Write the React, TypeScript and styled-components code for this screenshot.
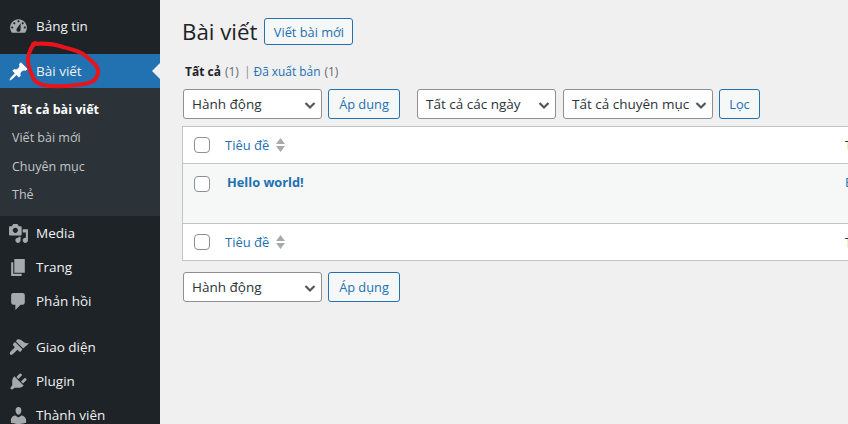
import React from 'react';
import styled, { createGlobalStyle } from 'styled-components';

const GlobalStyle = createGlobalStyle`
  html, body {
    margin: 0;
    padding: 0;
    background: #f0f0f1;
    overflow: hidden;
  }
  * {
    box-sizing: border-box;
  }
`;

const Page = styled.div`
  position: relative;
  width: 848px;
  height: 424px;
  display: flex;
  overflow: hidden;
  font-family: 'Open Sans', 'Liberation Sans', sans-serif;
  font-size: 13px;
  color: #3c434a;
`;

const Sidebar = styled.nav`
  width: 160px;
  flex-shrink: 0;
  background: #1d2327;
  padding-top: 9px;
`;

const MenuItem = styled.div<{ $active?: boolean; $gapTop?: number }>`
  position: relative;
  height: 34px;
  margin-top: ${(p) => p.$gapTop ?? 0}px;
  display: flex;
  align-items: center;
  padding-left: 8px;
  gap: 7px;
  font-size: 13.5px;
  color: #f0f0f1;
  background: ${(p) => (p.$active ? '#2271b1' : 'transparent')};
  svg {
    width: 21px;
    height: 21px;
    fill: ${(p) => (p.$active ? '#fff' : '#a7aaad')};
    flex-shrink: 0;
  }
`;

const ActiveArrow = styled.span`
  position: absolute;
  right: 0;
  top: 9px;
  border: 8px solid transparent;
  border-right-color: #f0f0f1;
  border-left-width: 0;
`;

const SubMenu = styled.div`
  height: 128px;
  background: #2c3338;
  padding: 7px 0 0 12px;
`;

const SubItem = styled.div<{ $current?: boolean }>`
  height: 28.5px;
  display: flex;
  align-items: center;
  font-size: 12.5px;
  color: ${(p) => (p.$current ? '#fff' : '#c3c4c7')};
  font-weight: ${(p) => (p.$current ? 700 : 400)};
`;

const Main = styled.main`
  flex: 1;
  min-width: 0;
  padding: 18px 0 0 22px;
`;

const TitleRow = styled.div`
  display: flex;
  align-items: center;
  gap: 7px;
  height: 27px;
`;

const Title = styled.h1`
  margin: 0;
  font-size: 22.3px;
  line-height: 27px;
  font-weight: 400;
  color: #1d2327;
`;

const Button = styled.div<{ $width: number; $height?: number }>`
  width: ${(p) => p.$width}px;
  height: ${(p) => p.$height ?? 30}px;
  flex-shrink: 0;
  display: flex;
  align-items: center;
  justify-content: center;
  border: 1px solid #2271b1;
  border-radius: 3px;
  background: #f6f7f7;
  color: #2271b1;
  font-size: 12.8px;
`;

const Tabs = styled.div`
  display: flex;
  align-items: center;
  height: 18px;
  margin-top: 17px;
  padding-left: 3px;
  font-size: 12px;
  color: #646970;
`;

const TabCurrent = styled.span`
  color: #1d2327;
  font-weight: 700;
`;

const TabLink = styled.span`
  color: #2271b1;
  font-size: 11.9px;
`;

const TabCount = styled.span`
  margin-left: 4px;
`;

const TabSep = styled.span`
  margin: 0 3px 0 5px;
  color: #8c8f94;
`;

const Toolbar = styled.div<{ $top: number }>`
  display: flex;
  align-items: center;
  margin-top: ${(p) => p.$top}px;
  padding-left: 1px;
`;

const Select = styled.div<{ $width: number; $before?: number; $after?: number }>`
  position: relative;
  width: ${(p) => p.$width}px;
  height: 30px;
  flex-shrink: 0;
  margin-left: ${(p) => p.$before ?? 0}px;
  margin-right: ${(p) => p.$after ?? 6}px;
  display: flex;
  align-items: center;
  padding-left: 8px;
  background: #fff;
  border: 1px solid #8c8f94;
  border-radius: 3px;
  font-size: 13.5px;
  color: #2c3338;
  white-space: nowrap;
  svg {
    position: absolute;
    right: 5px;
    top: 9px;
    width: 12px;
    height: 12px;
    fill: none;
    stroke: #50575e;
    stroke-width: 2.2;
  }
`;

const Table = styled.div`
  width: 700px;
  margin-top: 7px;
  background: #fff;
  border: 1px solid #c3c4c7;
  border-right: 0;
`;

const Row = styled.div<{ $height: number; $alt?: boolean; $divider?: boolean; $alignTop?: boolean }>`
  height: ${(p) => p.$height}px;
  display: flex;
  align-items: ${(p) => (p.$alignTop ? 'flex-start' : 'center')};
  padding: ${(p) => (p.$alignTop ? '12px' : '0')} 0 0 11px;
  background: ${(p) => (p.$alt ? '#f6f7f7' : '#fff')};
  border-top: ${(p) => (p.$divider ? '1px solid #c3c4c7' : '0')};
`;

const Checkbox = styled.span`
  width: 16px;
  height: 16px;
  flex-shrink: 0;
  background: #fff;
  border: 1px solid #8c8f94;
  border-radius: 4px;
`;

const TitleCell = styled.div`
  width: 635px;
  flex-shrink: 0;
  display: flex;
  align-items: center;
`;

const ColumnTitle = styled.span`
  margin-left: 15px;
  font-size: 13px;
  color: #2271b1;
`;

const SortIcon = styled.svg`
  width: 9px;
  height: 14px;
  margin-left: 7px;
  fill: #a7aaad;
`;

const PostTitle = styled.span`
  margin-left: 17px;
  margin-top: -3px;
  font-size: 12.8px;
  font-weight: 700;
  color: #2271b1;
`;

const AuthorCell = styled.span<{ $color: string; $up?: number }>`
  white-space: nowrap;
  margin-top: ${(p) => -(p.$up ?? 0)}px;
  font-size: 13px;
  color: ${(p) => p.$color};
`;

const Scribble = styled.svg`
  position: absolute;
  left: 24px;
  top: 36px;
  width: 84px;
  height: 56px;
  fill: none;
  stroke: #e8141c;
  stroke-width: 4;
  stroke-linecap: round;
  stroke-linejoin: round;
`;

const icons: Record<string, string> = {
  dashboard:
    'M3.76 16h12.48c1.1-1.37 1.76-3.11 1.76-5 0-4.42-3.58-8-8-8s-8 3.58-8 8c0 1.89.66 3.63 1.76 5zM10 4c.55 0 1 .45 1 1s-.45 1-1 1-1-.45-1-1 .45-1 1-1zM6 6c.55 0 1 .45 1 1s-.45 1-1 1-1-.45-1-1 .45-1 1-1zm8 0c.55 0 1 .45 1 1s-.45 1-1 1-1-.45-1-1 .45-1 1-1zm-5.37 5.55L12 7v6c0 1.1-.9 2-2 2s-2-.9-2-2c0-.57.24-1.08.63-1.45zM4 10c.55 0 1 .45 1 1s-.45 1-1 1-1-.45-1-1 .45-1 1-1zm12 0c.55 0 1 .45 1 1s-.45 1-1 1-1-.45-1-1 .45-1 1-1z',
  post: 'M10.44 3.02l1.82-1.82 6.36 6.35-1.83 1.82c-1.05-.68-2.48-.57-3.41.36l-.75.75c-.92.93-1.04 2.35-.35 3.41l-1.83 1.82-2.41-2.41-2.8 2.79c-.42.42-3.38 2.71-3.8 2.29s1.86-3.39 2.28-3.81l2.79-2.79L4.1 9.36l1.83-1.82c1.05.69 2.48.57 3.4-.36l.75-.75c.93-.92 1.05-2.35.36-3.41z',
  media:
    'M13 11V4c0-.55-.45-1-1-1h-1.67L9 1H5L3.67 3H2c-.55 0-1 .45-1 1v7c0 .55.45 1 1 1h10c.55 0 1-.45 1-1zM7 4.5c1.38 0 2.5 1.12 2.5 2.5S8.38 9.5 7 9.5 4.5 8.38 4.5 7 5.62 4.5 7 4.5zM14 6h5v10.5c0 1.38-1.12 2.5-2.5 2.5S14 17.88 14 16.5s1.12-2.5 2.5-2.5c.17 0 .34.02.5.05V9h-3V6zm-4 8.05V13h2v3.5c0 1.38-1.12 2.5-2.5 2.5S7 17.88 7 16.5 8.12 14 9.5 14c.17 0 .34.02.5.05z',
  page: 'M6 15V2h10v13H6zm-1 1h8v2H3V5h2v11z',
  comments: 'M5 2h9c1.1 0 2 .9 2 2v7c0 1.1-.9 2-2 2h-2l-5 5v-5H5c-1.1 0-2-.9-2-2V4c0-1.1.9-2 2-2z',
  appearance:
    'M14.48 11.06L7.41 3.99l1.5-1.5c.5-.56 2.3-.47 3.51.32 1.21.8 1.43 1.28 2.91 2.1 1.18.64 2.45 1.26 4.45.85-1 1.8-3.2 3.4-5.3 5.3zm-.71.71L6.7 4.7 4.93 6.47c-.39.39-.39 1.02 0 1.41l1.06 1.06c.39.39.39 1.03 0 1.42l-3.5 3.5c-.8.8-1 2.1-.4 2.8s1.9.4 2.7-.4l3.5-3.5c.39-.39 1.03-.39 1.42 0l1.06 1.06c.39.39 1.02.39 1.41 0z',
  plugin:
    'M13.11 4.36L9.87 7.6 8 5.73l3.24-3.24c.35-.34 1.05-.2 1.56.32.52.51.66 1.21.31 1.55zm-8 1.77l.91-1.12 9.01 9.01-1.19.84c-.71.71-2.63 1.16-3.82 1.16H6.14L4.9 17.26c-.59.59-1.54.59-2.12 0-.59-.58-.59-1.53 0-2.12l1.24-1.24v-3.88c0-1.13.4-3.19 1.09-3.89zm7.26 3.97l3.24-3.24c.34-.35 1.04-.21 1.55.31.52.51.66 1.21.31 1.55l-3.24 3.25z',
  users:
    'M10 9.25c-2.27 0-2.73-3.44-2.73-3.44C7 4.02 7.82 2 9.97 2c2.16 0 2.98 2.02 2.71 3.81 0 0-.41 3.44-2.68 3.44zm0 2.57L12.72 10c2.39 0 4.52 2.33 4.52 4.53v2.49s-3.65 1.13-7.24 1.13c-3.65 0-7.24-1.13-7.24-1.13v-2.49c0-2.25 1.94-4.48 4.15-4.48z',
};

function MenuIcon({ name }: { name: string }) {
  return (
    <svg viewBox="0 0 20 20">
      <path d={icons[name]} />
    </svg>
  );
}

function Chevron() {
  return (
    <svg viewBox="0 0 12 12">
      <path d="M1.5 4l4.5 4.5L10.5 4" />
    </svg>
  );
}

function HeaderCells() {
  return (
    <>
      <Checkbox />
      <TitleCell>
        <ColumnTitle>Tiêu đề</ColumnTitle>
        <SortIcon viewBox="0 0 9 14">
          <path d="M4.5 0L9 6H0zM0 8h9l-4.5 6z" />
        </SortIcon>
      </TitleCell>
      <AuthorCell $color="#2c3338">Tác giả</AuthorCell>
    </>
  );
}

function App() {
  return (
    <Page>
      <GlobalStyle />
      <Sidebar>
        <MenuItem>
          <MenuIcon name="dashboard" />
          Bảng tin
        </MenuItem>
        <MenuItem $active $gapTop={11}>
          <MenuIcon name="post" />
          Bài viết
          <ActiveArrow />
        </MenuItem>
        <SubMenu>
          <SubItem $current>Tất cả bài viết</SubItem>
          <SubItem>Viết bài mới</SubItem>
          <SubItem>Chuyên mục</SubItem>
          <SubItem>Thẻ</SubItem>
        </SubMenu>
        <MenuItem>
          <MenuIcon name="media" />
          Media
        </MenuItem>
        <MenuItem>
          <MenuIcon name="page" />
          Trang
        </MenuItem>
        <MenuItem>
          <MenuIcon name="comments" />
          Phản hồi
        </MenuItem>
        <MenuItem $gapTop={12}>
          <MenuIcon name="appearance" />
          Giao diện
        </MenuItem>
        <MenuItem>
          <MenuIcon name="plugin" />
          Plugin
        </MenuItem>
        <MenuItem>
          <MenuIcon name="users" />
          Thành viên
        </MenuItem>
      </Sidebar>
      <Main>
        <TitleRow>
          <Title>Bài viết</Title>
          <Button $width={89} $height={27}>Viết bài mới</Button>
        </TitleRow>
        <Tabs>
          <TabCurrent>Tất cả</TabCurrent>
          <TabCount>(1)</TabCount>
          <TabSep>|</TabSep>
          <TabLink>Đã xuất bản</TabLink>
          <TabCount>(1)</TabCount>
        </Tabs>
        <Toolbar $top={9}>
          <Select $width={139}>
            Hành động
            <Chevron />
          </Select>
          <Button $width={72}>Áp dụng</Button>
          <Select $width={139} $before={17} $after={7}>
            Tất cả các ngày
            <Chevron />
          </Select>
          <Select $width={150}>
            Tất cả chuyên mục
            <Chevron />
          </Select>
          <Button $width={41}>Lọc</Button>
        </Toolbar>
        <Table>
          <Row $height={36}>
            <HeaderCells />
          </Row>
          <Row $height={60} $alt $divider $alignTop>
            <Checkbox />
            <TitleCell>
              <PostTitle>Hello world!</PostTitle>
            </TitleCell>
            <AuthorCell $color="#2271b1" $up={3}>Bùi</AuthorCell>
          </Row>
          <Row $height={37} $divider>
            <HeaderCells />
          </Row>
        </Table>
        <Toolbar $top={11}>
          <Select $width={139}>
            Hành động
            <Chevron />
          </Select>
          <Button $width={72}>Áp dụng</Button>
        </Toolbar>
      </Main>
      <Scribble viewBox="0 0 84 56">
        <path d="M9 8C20 7 30 8 39 11C50 14 58 16 63 21C70 27 75 31 74 37C73 44 68 47 60 48C48 50 30 51 19 49C12 47 9 44 8 39C5 32 3 27 4 22C5 16 7 11 11 7" />
      </Scribble>
    </Page>
  );
}

export default App;
